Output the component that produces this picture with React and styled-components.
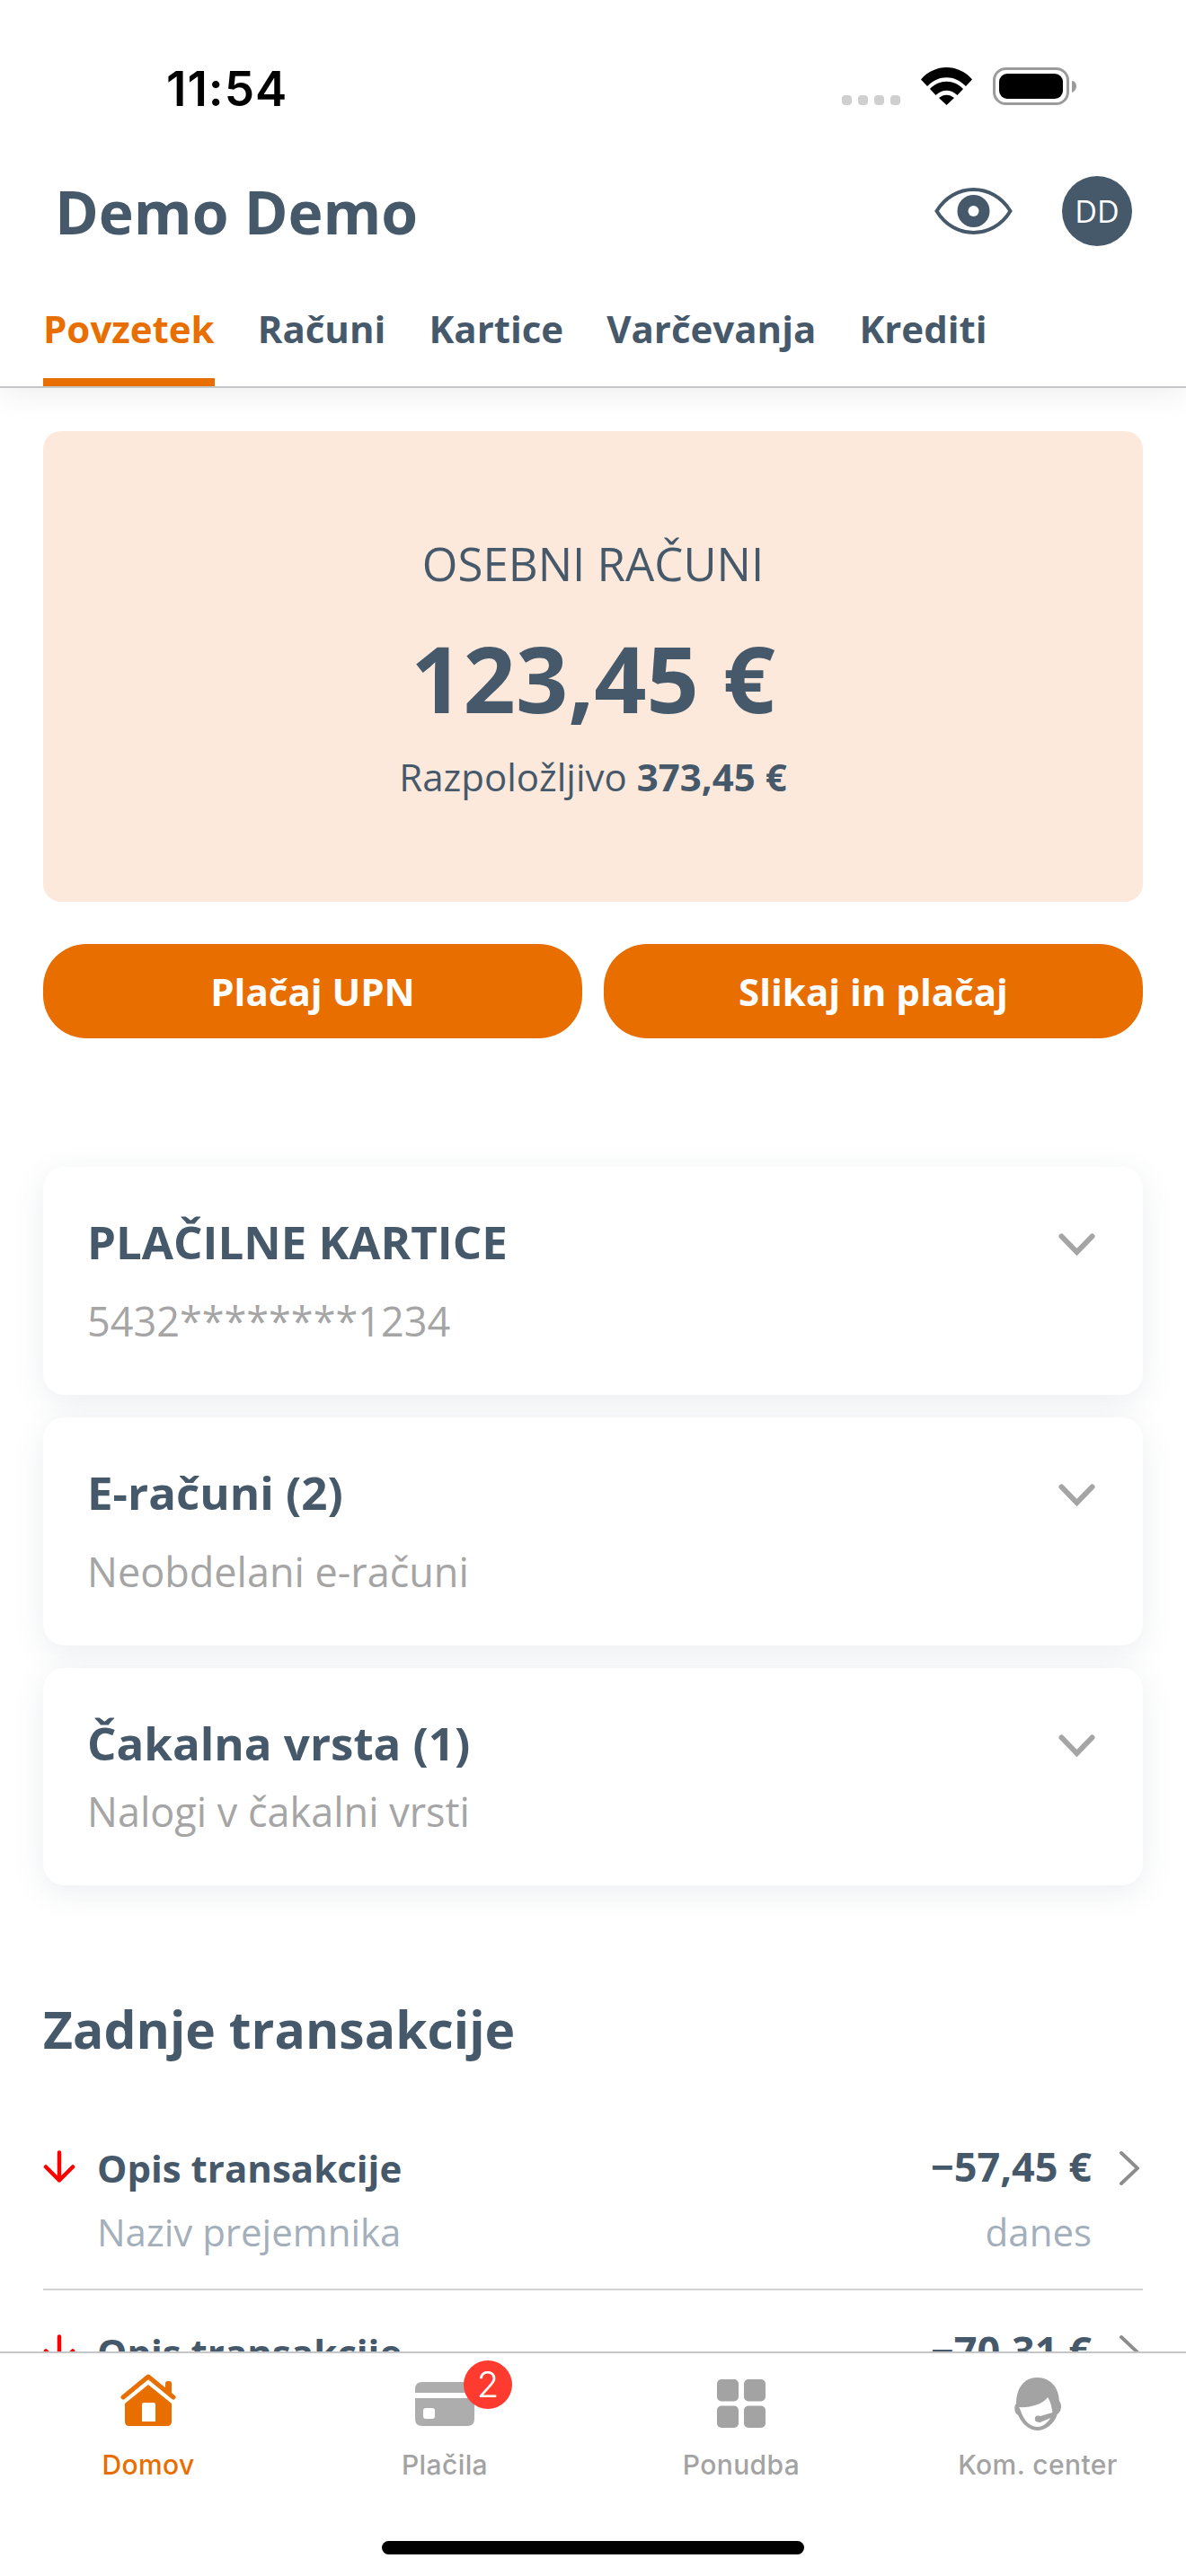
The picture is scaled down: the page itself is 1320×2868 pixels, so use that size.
import React from "react";
import styled, { createGlobalStyle } from "styled-components";

const Global = createGlobalStyle`
  html, body { margin: 0; padding: 0; background: #fff; }
  #root { width: 1320px; height: 2868px; }
  * { box-sizing: border-box; }
`;

const SLATE = "#46596b";
const ORANGE = "#e96e00";
const OPEN = `"Open Sans", "Noto Sans", sans-serif`;
const UI = `Inter, "Liberation Sans", sans-serif`;

const Phone = styled.div`
  width: 1320px; height: 2868px; display: flex; flex-direction: column;
  background: #fff; overflow: hidden; font-family: ${OPEN}; color: ${SLATE};
`;
const Top = styled.header`
  flex: none; height: 432px; display: flex; flex-direction: column;
  border-bottom: 2px solid #c4c6c8; box-shadow: 0 6px 34px rgba(0,0,0,.07);
  position: relative; z-index: 1; background: #fff;
`;
const StatusBar = styled.div`
  height: 196px; flex: none; display: flex; align-items: flex-start;
  padding: 75px 122px 0 185px;
`;
const Clock = styled.div`
  font-family: ${UI}; font-weight: 600; font-size: 53px; line-height: 42px;
  color: #000; letter-spacing: 1px; flex: 1; padding-top: 3px;
`;
const StatusIcons = styled.div` display: flex; align-items: flex-end; height: 42px; `;
const Dots = styled.div` display: flex; gap: 7px; margin-right: 23px; `;
const Dot = styled.i` width: 11px; height: 11px; border-radius: 4px; background: #cfcfcf; display: block; `;
const Battery = styled.svg` margin-left: 23px; display: block; `;
const Wifi = styled.svg` display: block; `;

const HeaderRow = styled.div`
  height: 78px; flex: none; display: flex; align-items: center; padding: 0 60px 0 61px;
`;
const Name = styled.h1`
  margin: 0; flex: 1; font-size: 66px; line-height: 78px; font-weight: 700; color: ${SLATE};
`;
const EyeIcon = styled.svg` display: block; `;
const Avatar = styled.div`
  width: 78px; height: 78px; margin-left: 55px; border-radius: 50%; background: ${SLATE}; color: #fff;
  display: flex; align-items: center; justify-content: center; font-size: 34px; font-weight: 400;
`;
const Tabs = styled.nav`
  display: flex; gap: 48px; padding: 0 48px; margin-top: auto;
`;
const Tab = styled.div`
  height: 93px; font-size: 42px; line-height: 58px; font-weight: 700;
  color: ${p => (p.$active ? ORANGE : SLATE)};
  border-bottom: 9px solid ${p => (p.$active ? ORANGE : "transparent")};
`;

const Content = styled.main`
  flex: 1; min-height: 0; overflow: hidden; padding: 48px 48px 0;
`;
const Summary = styled.section`
  height: 524px; border-radius: 20px; background: #fce9db; display: flex; flex-direction: column;
  align-items: center; padding-top: 117px;
`;
const SummaryLabel = styled.div` font-size: 51px; line-height: 60px; font-weight: 400; `;
const SummaryAmount = styled.div` font-size: 102px; line-height: 126px; font-weight: 700; margin-top: 35px; `;
const SummaryAvail = styled.div`
  font-size: 42px; line-height: 54px; margin-top: 20px; font-weight: 400;
  b { font-weight: 700; }
`;
const Buttons = styled.div` display: grid; grid-template-columns: 600px 600px; gap: 24px; margin-top: 47px; `;
const Pay = styled.button`
  height: 105px; border: 0; border-radius: 48px; background: ${ORANGE}; color: #fff;
  font-family: ${OPEN}; font-size: 42px; font-weight: 700; padding: 0;
`;
const Cards = styled.div` display: flex; flex-direction: column; gap: 25px; margin-top: 143px; `;
const Card = styled.article`
  position: relative; height: ${p => p.$h}px; background: #fff; border-radius: 24px;
  padding: 50px 49px 0; box-shadow: 0 8px 34px rgba(70,89,107,.1);
`;
const CardTitle = styled.div` font-size: 51px; line-height: 66px; font-weight: 700; color: ${SLATE}; `;
const CardSub = styled.div`
  font-size: 45px; line-height: 60px; font-weight: 400; color: #a5a5a5; margin-top: ${p => p.$gap}px;
`;
const Caret = styled.svg` position: absolute; right: 53px; top: 74px; `;

const Section = styled.h2`
  margin: 122px 0 0; font-size: 57px; line-height: 76px; font-weight: 700; color: ${SLATE};
`;
const TxList = styled.div` margin-top: 48px; `;
const Tx = styled.div`
  display: grid; grid-template-columns: 60px 1fr auto 57px; height: 205px; padding-top: 49px;
  border-bottom: ${p => (p.$last ? "none" : "2px solid #cfd1d3")};
`;
const TxArrow = styled.svg` display: block; `;
const TxMain = styled.div` display: flex; flex-direction: column; `;
const TxRight = styled(TxMain)` align-items: flex-end; `;
const TxTitle = styled.div` font-size: 42px; line-height: 56px; font-weight: 700; color: ${SLATE}; margin-top: -8px; `;
const TxAmount = styled(TxTitle)` font-size: 45px; margin: -10px 0 2px; `;
const TxSub = styled.div` font-size: 42px; line-height: 56px; font-weight: 400; color: #a3b0bc; margin-top: 15px; `;
const TxChevron = styled.svg` display: block; justify-self: end; margin: 1px 4px 0 0; `;

const Bar = styled.footer`
  flex: none; height: 250px; border-top: 2px solid #c4c6c8; background: #fff; position: relative; z-index: 1;
  display: flex; flex-direction: column;
`;
const BarItems = styled.div`
  display: grid; grid-template-columns: repeat(4, 330px); height: 146px; padding-top: 20px;
`;
const BarItem = styled.div`
  position: relative; display: flex; flex-direction: column; align-items: center;
  font-family: ${UI}; font-size: 30px; line-height: 34px; font-weight: 500; letter-spacing: .4px;
  color: ${p => (p.$active ? ORANGE : "#a3a3a3")};
`;
const IconSlot = styled.div`
  height: 87px; display: flex; align-items: flex-end; padding-bottom: ${p => p.$pb ?? 26}px; position: relative;
`;
const Badge = styled.span`
  position: absolute; left: 54px; top: -12px; width: 54px; height: 54px; border-radius: 50%;
  background: #ff3b30; color: #fff; display: flex; align-items: center; justify-content: center;
  font-size: 40px; font-weight: 300; font-family: ${UI}; letter-spacing: 0;
`;
const HomeBar = styled.div`
  width: 470px; height: 15px; border-radius: 8px; background: #000; margin: 63px auto 0;
`;

const CaretIcon = () => (
  <Caret width="41" height="25" viewBox="0 0 41 25" fill="none" stroke="#a5a5a5" strokeWidth="6" strokeLinecap="round">
    <path d="M3.5 3.5 L20.5 21 L37.5 3.5" />
  </Caret>
);

const Arrow = () => (
  <TxArrow width="36" height="36" viewBox="0 0 36 36" fill="none" stroke="#fe0000" strokeWidth="4.5" strokeLinecap="round" strokeLinejoin="round">
    <path d="M18 2.5 V33.5 M3 18.5 L18 33.5 L33 18.5" />
  </TxArrow>
);
const Chevron = () => (
  <TxChevron width="22" height="38" viewBox="0 0 22 38" fill="none" stroke="#8c8c8c" strokeWidth="3.8" strokeLinecap="round">
    <path d="M2 2 L20 19 L2 36" />
  </TxChevron>
);

const TxRow = ({ amount, last }) => (
  <Tx $last={last}>
    <Arrow />
    <TxMain>
      <TxTitle>Opis transakcije</TxTitle>
      <TxSub>Naziv prejemnika</TxSub>
    </TxMain>
    <TxRight>
      <TxAmount>{amount}</TxAmount>
      <TxSub>danes</TxSub>
    </TxRight>
    <Chevron />
  </Tx>
);

export default function App() {
  return (
    <Phone>
      <Global />
      <Top>
        <StatusBar>
          <Clock>11:54</Clock>
          <StatusIcons>
            <Dots><Dot /><Dot /><Dot /><Dot /></Dots>
            <Wifi width="57" height="42" viewBox="0 0 57 42" fill="#000">
              <path d="M0 13.5 C15 -4.5 42 -4.5 57 13.5 L50 21 C37 8 20 8 7 21 Z" />
              <path d="M10 24 C20 13 37 13 47 24 L40.5 31 C33 24 24 24 16.5 31 Z" />
              <path d="M20 34 C25 29.5 32 29.5 37 34 L28.5 42 Z" />
            </Wifi>
            <Battery width="93" height="42" viewBox="0 0 93 42">
              <rect x="1.5" y="1.5" width="82" height="39" rx="13" fill="none" stroke="#9b9b9b" strokeWidth="3" />
              <rect x="7" y="7" width="71" height="28" rx="9" fill="#000" />
              <path d="M88 15 C91 15 93 18 93 21 C93 24 91 27 88 28 Z" fill="#9b9b9b" />
            </Battery>
          </StatusIcons>
        </StatusBar>
        <HeaderRow>
          <Name>Demo Demo</Name>
          <EyeIcon width="87" height="54" viewBox="0 0 87 54">
            <path d="M2.5 27 C22 -5 65 -5 84.5 27 C65 59 22 59 2.5 27 Z" fill="none" stroke={SLATE} strokeWidth="4" />
            <circle cx="43.5" cy="27" r="18" fill={SLATE} />
            <circle cx="43.5" cy="27" r="6" fill="#fff" />
          </EyeIcon>
          <Avatar>DD</Avatar>
        </HeaderRow>
        <Tabs>
          <Tab $active>Povzetek</Tab>
          <Tab>Računi</Tab>
          <Tab>Kartice</Tab>
          <Tab>Varčevanja</Tab>
          <Tab>Krediti</Tab>
        </Tabs>
      </Top>
      <Content>
        <Summary>
          <SummaryLabel>OSEBNI RAČUNI</SummaryLabel>
          <SummaryAmount>123,45 €</SummaryAmount>
          <SummaryAvail>Razpoložljivo <b>373,45 €</b></SummaryAvail>
        </Summary>
        <Buttons>
          <Pay>Plačaj UPN</Pay>
          <Pay>Slikaj in plačaj</Pay>
        </Buttons>
        <Cards>
          <Card $h={254}>
            <CardTitle>PLAČILNE KARTICE</CardTitle>
            <CardSub $gap={26}>5432********1234</CardSub>
            <CaretIcon />
          </Card>
          <Card $h={254}>
            <CardTitle>E-računi (2)</CardTitle>
            <CardSub $gap={26}>Neobdelani e-računi</CardSub>
            <CaretIcon />
          </Card>
          <Card $h={242}>
            <CardTitle>Čakalna vrsta (1)</CardTitle>
            <CardSub $gap={14}>Nalogi v čakalni vrsti</CardSub>
            <CaretIcon />
          </Card>
        </Cards>
        <Section>Zadnje transakcije</Section>
        <TxList>
          <TxRow amount="−57,45 €" />
          <TxRow amount="−70,31 €" last />
        </TxList>
      </Content>
      <Bar>
        <BarItems>
          <BarItem $active>
            <IconSlot>
              <svg width="62" height="58" viewBox="0 0 62 58" fill={ORANGE}>
                <rect x="50" y="8" width="7" height="14" rx="2.5" />
                <path d="M3 26 L31 3 L59 26" fill="none" stroke={ORANGE} strokeWidth="5" strokeLinecap="round" strokeLinejoin="round" />
                <path fillRule="evenodd" d="M31 12 L57 33 V53 Q57 58 52 58 H10 Q5 58 5 53 V33 Z M26 32 Q24 32 24 34 V53 H39 V34 Q39 32 37 32 Z" />
              </svg>
            </IconSlot>
            Domov
          </BarItem>
          <BarItem>
            <IconSlot>
              <svg width="66" height="49" viewBox="0 0 66 49" fill="#adadad">
                <path d="M0 12 V8 Q0 0 8 0 H58 Q66 0 66 8 V12 Z" />
                <path fillRule="evenodd" d="M0 18 H66 V41 Q66 49 58 49 H8 Q0 49 0 41 Z M12 29 Q9 29 9 32 V38 Q9 41 12 41 H19 Q22 41 22 38 V32 Q22 29 19 29 Z" />
              </svg>
              <Badge>2</Badge>
            </IconSlot>
            Plačila
          </BarItem>
          <BarItem>
            <IconSlot $pb={24}>
              <svg width="54" height="54" viewBox="0 0 54 54" fill="#a3a3a3">
                <rect x="0" y="0" width="24" height="24.5" rx="5" />
                <rect x="30" y="0" width="24" height="24.5" rx="5" />
                <rect x="0" y="29.5" width="24" height="24.5" rx="5" />
                <rect x="30" y="29.5" width="24" height="24.5" rx="5" />
              </svg>
            </IconSlot>
            Ponudba
          </BarItem>
          <BarItem>
            <IconSlot $pb={21}>
              <svg width="53" height="59" viewBox="0 0 50 59" preserveAspectRatio="none" fill="#a3a3a3">
                <path d="M24 0 C38 0 47 12 47 26 C50 29 50 38 45 41 C42 52 32 59 24 59 C15 59 7 50 4 42 C0 40 -1 32 2 29 C2 12 10 0 24 0 Z" />
                <path d="M5 33 C15 34 30 30 35 22 C38 27 39 32 40 39 L24 44 C22 46 23 50 27 50 L38 45 C35 50 30 55 24 55 C15 55 9 45 7 38 Z" fill="#fff" />
                <circle cx="25" cy="46" r="3.5" />
              </svg>
            </IconSlot>
            Kom. center
          </BarItem>
        </BarItems>
        <HomeBar />
      </Bar>
    </Phone>
  );
}
